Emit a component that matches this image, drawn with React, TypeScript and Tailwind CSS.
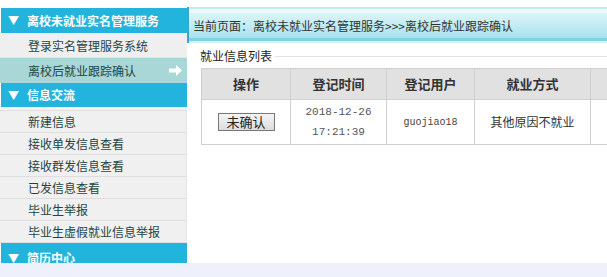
const cjk = { fontFamily: '"Noto Sans CJK SC", "Liberation Sans", sans-serif' };

const group2 = [
  "新建信息",
  "接收单发信息查看",
  "接收群发信息查看",
  "已发信息查看",
  "毕业生举报",
  "毕业生虚假就业信息举报",
];

function GroupHeader({ title, h }: { title: string; h: string }) {
  return (
    <div className={`${h} bg-[#22b4dc] text-white font-bold text-[12px] flex items-center pl-[7px] ml-[1px]`}>
      <span className="text-[11px] mr-[8px]">▼</span>
      <span>{title}</span>
    </div>
  );
}

export default function App() {
  return (
    <div className="w-[607px] h-[277px] overflow-hidden bg-white flex flex-col text-[#333]" style={cjk}>
      <div className="flex-1 flex min-h-0 overflow-hidden">
        {/* Sidebar */}
        <div className="w-[187px] shrink-0 pt-[8px]">
          <GroupHeader title="离校未就业实名管理服务" h="h-[25px]" />
          <div className="h-[1px] bg-white" />
          <div className="h-[24px] bg-[#f0efef] border-b border-[#e2e2e2] flex items-center pl-[28px] text-[12px] text-[#1d4545]">
            登录实名管理服务系统
          </div>
          <div className="h-[25px] bg-[#a9d6d6] flex items-center justify-between pl-[28px] pr-[5px] text-[12px] text-[#1d4545]">
            <span>离校后就业跟踪确认</span>
            <svg width="13" height="11" viewBox="0 0 13 11">
              <path d="M0 3.5h7V0l6 5.5-6 5.5V7.5H0z" fill="#fff" />
            </svg>
          </div>
          <GroupHeader title="信息交流" h="h-[24px]" />
          <div className="h-[4px] bg-[#f3f3f3] border-b border-[#dedede]" />
          {group2.map((t) => (
            <div
              key={t}
              className="h-[22px] bg-[#f1f0f0] border-b border-[#dedede] border-r border-r-[#e4e4e4] flex items-center pl-[28px] text-[12px] text-[#1d4545]"
            >
              {t}
            </div>
          ))}
          <GroupHeader title="简历中心" h="h-[30px]" />
        </div>

        {/* Main */}
        <div className="flex-1 min-w-0 pt-[7px]">
          <div className="border-l-2 border-[#3aa6cf]">
            <div className="h-[2px] bg-[#c3ecf1]" />
            <div className="h-[4px] bg-[#ecf9fb]" />
            <div className="h-[25px] bg-gradient-to-b from-[#dcf5f9] to-[#a6e2ee] flex items-center pl-[4px] text-[12px] text-[#333]">
              当前页面：离校未就业实名管理服务&gt;&gt;&gt;离校后就业跟踪确认
            </div>
            <div className="h-[3px] bg-[#7dd3e1]" />
            <div className="h-[2px] bg-[#d6f1f5]" />
          </div>

          <div className="pl-[10px] pt-[4px]">
            <div className="flex items-center">
              <span className="text-[12px] text-[#222] px-[3px]">就业信息列表</span>
              <div className="flex-1 h-[1px] bg-[#e2e2e2]" />
            </div>
            <table className="ml-[4px] mt-[3px] border-collapse text-[12px] w-[460px] table-fixed">
              <colgroup>
                <col className="w-[89px]" />
                <col className="w-[96px]" />
                <col className="w-[88px]" />
                <col className="w-[116px]" />
                <col className="w-[71px]" />
              </colgroup>
              <thead>
                <tr className="h-[31px] bg-[#e1e1e1]">
                  {["操作", "登记时间", "登记用户", "就业方式", ""].map((h, i) => (
                    <th key={i} className="border border-[#cfcfcf] font-bold text-[13px] text-[#333]">
                      {h}
                    </th>
                  ))}
                </tr>
              </thead>
              <tbody>
                <tr className="h-[45px]">
                  <td className="border border-[#cfcfcf] text-center">
                    <button className="w-[57px] h-[18px] bg-gradient-to-b from-[#f4f4f4] to-[#dcdcdc] border border-[#777] text-[13px] leading-[16px] text-[#222]">
                      未确认
                    </button>
                  </td>
                  <td
                    className="border border-[#cfcfcf] text-center text-[11px] leading-[20px] text-[#555]"
                    style={{ fontFamily: '"Liberation Mono", monospace' }}
                  >
                    2018-12-26
                    <br />
                    17:21:39
                  </td>
                  <td
                    className="border border-[#cfcfcf] text-center text-[10px] text-[#444]"
                    style={{ fontFamily: '"Liberation Mono", monospace' }}
                  >
                    guojiao18
                  </td>
                  <td className="border border-[#cfcfcf] text-center text-[12px] text-[#333]">其他原因不就业</td>
                  <td className="border border-[#cfcfcf]"></td>
                </tr>
              </tbody>
            </table>
          </div>
        </div>
      </div>
      <div className="h-[14px] shrink-0 bg-[#eef0fb]" />
    </div>
  );
}
